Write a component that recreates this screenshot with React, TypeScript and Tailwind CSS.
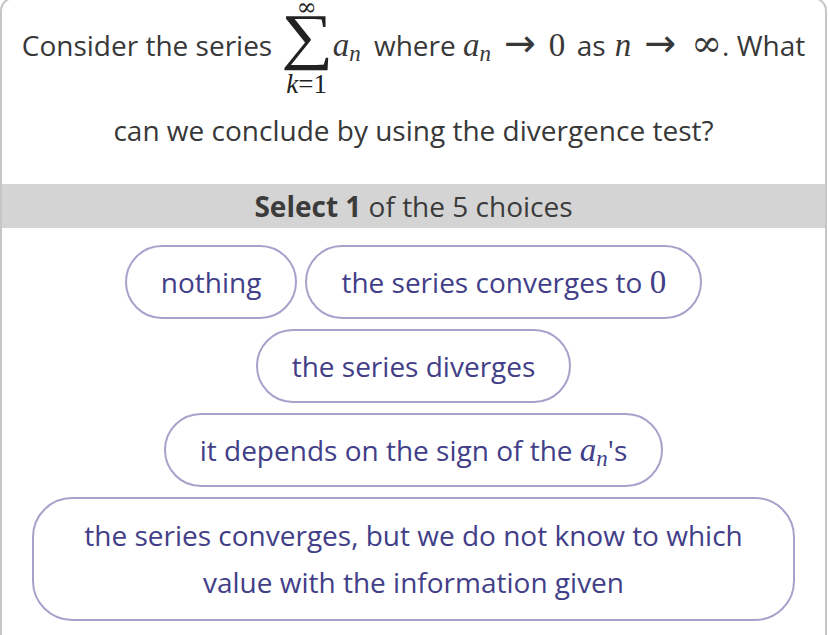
import React from 'react'

const SERIF = "font-['Liberation_Serif',serif]"

function An() {
  return (
    <span className={`${SERIF} italic text-[33px] leading-none`}>
      a<sub className="text-[23px] leading-none relative top-[5px] align-baseline">n</sub>
    </span>
  )
}

function Arrow() {
  return <span className="font-['DejaVu_Sans',sans-serif] text-[38px] leading-none mx-[13px]">→</span>
}

const CHOICES: React.ReactNode[] = [
  'nothing',
  <>the series converges to <span className={`${SERIF} text-[33px] leading-none`}>0</span></>,
  'the series diverges',
  <>it depends on the sign of the <An />'s</>,
  'the series converges, but we do not know to which value with the information given',
]

export default function App() {
  return (
    <div className="w-[828px] h-[635px] bg-white overflow-hidden font-['Open_Sans',sans-serif]">
      <div className="-mt-[3px] mr-[1px] h-[650px] border-2 border-[#c6c6c6] rounded-t-[14px] bg-white">
        {/* question */}
        <div className="pt-[1px] pb-[30px] text-[28px] text-[#383838] text-center">
          <p className="leading-[47px] whitespace-nowrap">
            Consider the series{' '}
            <span className={`${SERIF} inline-flex flex-col items-center align-middle ml-[5px] mr-[2px] text-[#222]`}>
              <span className="font-['DejaVu_Serif',serif] text-[24px] leading-[14px]">∞</span>
              <span className="text-[62px] leading-[44px] mb-[14px] scale-x-[1.18]">∑</span>
              <span className="text-[27px] leading-[24px]"><i>k</i>=1</span>
            </span>
            <span className="ml-[2px] mr-[6px]"><An /></span> where <An />
            <Arrow />
            <span className={`${SERIF} text-[33px] leading-none mr-[4px]`}>0</span> as{' '}
            <span className={`${SERIF} italic text-[33px] leading-none ml-[2px]`}>n</span>
            <span className="font-['DejaVu_Sans',sans-serif] text-[38px] leading-none ml-[13px] mr-[15px]">→</span>
            <span className="font-['DejaVu_Serif',serif] text-[37px] leading-none">∞</span>. What
          </p>
          <p className="mt-[11px] leading-[47px]">can we conclude by using the divergence test?</p>
        </div>

        {/* header band */}
        <div className="bg-[#d4d4d4] h-[44px] flex items-center justify-center text-[28px] text-[#3b3b3b]">
          <span><b className="font-bold">Select 1</b> of the 5 choices</span>
        </div>

        {/* choices */}
        <div className="flex flex-wrap justify-center gap-x-[8px] gap-y-[10px] px-[30px] pt-[17px]">
          {CHOICES.map((c, i) => (
            <button
              key={i}
              className={`border-2 border-[#a6a2cb] rounded-[40px] px-[34px] text-[28px] leading-[47px] text-[#423e88] bg-white text-center ${
                i === CHOICES.length - 1 ? 'py-[13px]' : 'py-[11.5px]'
              }`}
            >
              {c}
            </button>
          ))}
        </div>
      </div>
    </div>
  )
}
